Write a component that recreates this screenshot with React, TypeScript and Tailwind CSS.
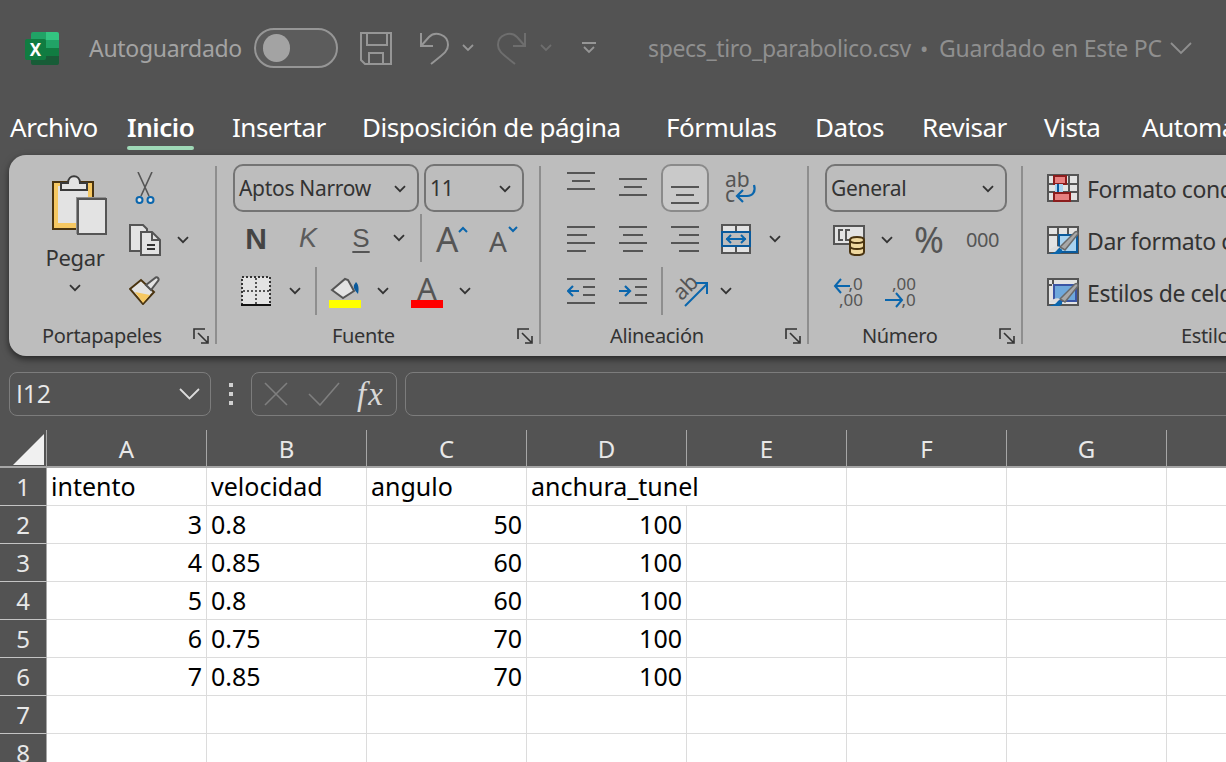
const ui = { fontFamily: '"Noto Sans", sans-serif' };

function Chevron({ className = "" }: { className?: string }) {
  return (
    <svg width="12" height="8" viewBox="0 0 12 8" className={"shrink-0 " + className}>
      <path d="M1 1.2l5 5 5-5" fill="none" stroke="#333" strokeWidth="1.8" />
    </svg>
  );
}

function Launcher() {
  return (
    <svg width="16" height="16" viewBox="0 0 16 16" className="shrink-0">
      <path d="M1 11V1h11M5 5l9 9M15 8v7H8" fill="none" stroke="#333" strokeWidth="1.6" />
    </svg>
  );
}

function Lines({ rows, h = 28 }: { rows: [number, number, number][]; h?: number }) {
  return (
    <svg width="28" height={h} viewBox={`0 0 28 ${h}`} className="shrink-0">
      {rows.map(([x, y, w], i) => (
        <rect key={i} x={x} y={y} width={w} height="2" fill="#555" />
      ))}
    </svg>
  );
}

function ExcelLogo() {
  return (
    <div className="relative w-[34px] h-[33px] shrink-0">
      <svg width="34" height="33" viewBox="0 0 34 33" className="block">
        <path d="M8 0h13v8H6V2a2 2 0 0 1 2-2z" fill="#21a366" />
        <path d="M21 0h11a2 2 0 0 1 2 2v6H21z" fill="#33c481" />
        <rect x="6" y="8" width="15" height="8" fill="#1a8a50" />
        <rect x="21" y="8" width="13" height="8" fill="#21a366" />
        <rect x="6" y="16" width="15" height="8" fill="#107c41" />
        <rect x="21" y="16" width="13" height="8" fill="#107c41" />
        <path d="M6 24h28v7a2 2 0 0 1-2 2H8a2 2 0 0 1-2-2z" fill="#185c37" />
        <rect x="0" y="7" width="21" height="21" rx="2" fill="#107c41" />
      </svg>
      <span className="absolute left-0 top-[7px] w-[21px] h-[21px] flex items-center justify-center text-white font-bold text-[17px] leading-none" style={ui}>
        X
      </span>
    </div>
  );
}

function TitleBar() {
  return (
    <div className="h-[96px] flex items-center pl-[25px] text-[#a3a3a3] whitespace-nowrap" style={ui}>
      <ExcelLogo />
      <span className="ml-[30px] w-[153px] text-[23px] tracking-[-0.3px]">Autoguardado</span>
      <div className="ml-[12px] w-[84px] h-[40px] rounded-[20px] border-2 border-[#969696] bg-[#5c5c5c] flex items-center pl-[7px]">
        <div className="w-[27px] h-[28px] rounded-full bg-[#a3a3a3]" />
      </div>
      <svg width="32" height="33" viewBox="0 0 32 33" className="ml-[22px]">
        <path d="M1 1h30v31H5l-4-4z M7 1v12h20V1 M9 32V21h14v11" fill="none" stroke="#969696" strokeWidth="2" />
      </svg>
      <svg width="30" height="34" viewBox="0 0 30 34" className="ml-[27px]">
        <path d="M2 2v13h12M2 15l8-9c6-6 19-3 19 8 0 6-3 8-17 19" fill="none" stroke="#969696" strokeWidth="2" />
      </svg>
      <svg width="12" height="8" viewBox="0 0 12 8" className="ml-[13px]">
        <path d="M1 1l5 5 5-5" fill="none" stroke="#969696" strokeWidth="1.8" />
      </svg>
      <svg width="30" height="34" viewBox="0 0 30 34" className="ml-[23px]">
        <path d="M28 2v13H16M28 15l-8-9C14 0 1 3 1 14c0 6 3 8 17 19" fill="none" stroke="#6e6e6e" strokeWidth="2" />
      </svg>
      <svg width="12" height="8" viewBox="0 0 12 8" className="ml-[13px]">
        <path d="M1 1l5 5 5-5" fill="none" stroke="#6e6e6e" strokeWidth="1.8" />
      </svg>
      <svg width="14" height="12" viewBox="0 0 14 12" className="ml-[30px]">
        <path d="M0 1h14M2 5l5 5 5-5" fill="none" stroke="#969696" strokeWidth="1.8" />
      </svg>
      <span className="ml-[52px] text-[23px] text-[#8f8f8f] tracking-[-0.35px] w-[272px]">specs_tiro_parabolico.csv</span>
      <span className="text-[22px] text-[#8f8f8f] w-[19px]">•</span>
      <span className="text-[23px] text-[#8f8f8f] tracking-[-0.2px] w-[231px]">Guardado en Este PC</span>
      <svg width="22" height="13" viewBox="0 0 22 13">
        <path d="M1 1l10 10L21 1" fill="none" stroke="#8f8f8f" strokeWidth="1.8" />
      </svg>
    </div>
  );
}

const tabs: [string, number][] = [
  ["Archivo", 117],
  ["Inicio", 105],
  ["Insertar", 130],
  ["Disposición de página", 304],
  ["Fórmulas", 149],
  ["Datos", 107],
  ["Revisar", 122],
  ["Vista", 98],
  ["Automatizar", 160],
];

function Tabs() {
  return (
    <div className="h-[59px] flex pl-[10px] text-white text-[26px] whitespace-nowrap tracking-[-0.45px]" style={ui}>
      {tabs.map(([name, w]) => (
        <div key={name} className="shrink-0 flex flex-col" style={{ width: w }}>
          <div className={"h-[50px] pt-[13px] leading-[36px] " + (name === "Inicio" ? "font-semibold" : "")}>{name}</div>
          {name === "Inicio" && <div className="w-[67px] h-[4px] rounded-[2px] bg-[#9fd9b7]" />}
        </div>
      ))}
    </div>
  );
}

function GroupLabel({ text, pl, launcher }: { text: string; pl: number; launcher?: number }) {
  return (
    <div className="h-[28px] flex items-center text-[20px] text-[#333] whitespace-nowrap tracking-[-0.35px]">
      <span className="shrink-0" style={{ marginLeft: pl, width: launcher }}>{text}</span>
      {launcher !== undefined && <Launcher />}
    </div>
  );
}

function Sep() {
  return <div className="w-[2px] h-[178px] mt-[2px] bg-[#8e8e8e] shrink-0" />;
}

function Select({ text, w }: { text: string; w: number }) {
  return (
    <div className="h-[48px] border-2 border-[#747474] rounded-[10px] flex items-center justify-between pl-[4px] pr-[11px] pt-[2px] text-[21px] text-[#333] shrink-0 tracking-[-0.3px]" style={{ width: w }}>
      {text}
      <Chevron />
    </div>
  );
}

function Clipboard() {
  return (
    <svg width="56" height="62" viewBox="0 0 56 62" className="block">
      <rect x="2" y="9" width="40" height="47" fill="#f6c862" stroke="#4a3410" strokeWidth="2" />
      <rect x="7" y="13" width="30" height="37" fill="#e3e3e3" />
      <path d="M10 10h7c0-9 12-9 12 0h7v7H10z" fill="#e3e3e3" stroke="#3a3a3a" strokeWidth="2" />
      <rect x="25" y="24" width="4" height="37" fill="#8f8f8f" />
      <rect x="25" y="24" width="30" height="3" fill="#8f8f8f" />
      <rect x="27" y="26" width="28" height="35" fill="#e3e3e3" stroke="#555" strokeWidth="2" />
    </svg>
  );
}

function Scissors() {
  return (
    <svg width="20" height="33" viewBox="0 0 20 33" className="block">
      <path d="M3 0l11 24M17 0L6 24" fill="none" stroke="#555" strokeWidth="1.6" />
      <circle cx="4.5" cy="28" r="3" fill="#e3e3e3" stroke="#0a66ad" strokeWidth="2" />
      <circle cx="15.5" cy="28" r="3" fill="#e3e3e3" stroke="#0a66ad" strokeWidth="2" />
    </svg>
  );
}

function CopyIcon() {
  return (
    <svg width="32" height="32" viewBox="0 0 32 32" className="block">
      <path d="M1 1h13l4 4v22H1z" fill="#e3e3e3" stroke="#555" strokeWidth="2" />
      <path d="M12 8h11l8 8v15H12z" fill="#e3e3e3" stroke="#555" strokeWidth="2" />
      <path d="M23 8v8h8" fill="none" stroke="#555" strokeWidth="2" />
      <path d="M18 21h8M18 25h8" stroke="#333" strokeWidth="2" />
    </svg>
  );
}

function BrushIcon() {
  return (
    <svg width="32" height="29" viewBox="0 0 32 29" className="block">
      <path d="M1 13L12 4l13 12-11 12z" fill="#e3e3e3" stroke="#4a3410" strokeWidth="2" />
      <path d="M6 16l15 3-7 8z" fill="#f6c862" />
      <path d="M17 9l9-7c2-2 5 1 3 3l-7 9z" fill="#e3e3e3" stroke="#555" strokeWidth="2" />
    </svg>
  );
}

function Portapapeles() {
  return (
    <div className="w-[206px] shrink-0 flex flex-col">
      <div className="h-[158px] flex">
        <div className="w-[120px] flex flex-col items-center pl-[12px] shrink-0">
          <div className="mt-[9px] ml-[7px]"><Clipboard /></div>
          <span className="mt-[6px] text-[22px] text-[#333] leading-[32px] tracking-[-0.3px]">Pegar</span>
          <Chevron className="mt-[11px]" />
        </div>
        <div className="flex flex-col">
          <div className="mt-[8px] ml-[6px]"><Scissors /></div>
          <div className="mt-[19px] flex items-center">
            <CopyIcon />
            <Chevron className="ml-[16px]" />
          </div>
          <div className="mt-[20px]"><BrushIcon /></div>
        </div>
      </div>
      <GroupLabel text="Portapapeles" pl={33} launcher={151} />
    </div>
  );
}

function Paint() {
  return (
    <svg width="32" height="32" viewBox="0 0 32 32" className="block">
      <path d="M3 14L16 3l3 1 6 11-11 7z" fill="#e3e3e3" stroke="#555" strokeWidth="2" />
      <path d="M27 6c3 3 3 8 2 12-2-3-5-5-4-9z" fill="#0a5a9c" />
      <rect x="0" y="24" width="32" height="8" fill="#ffff00" />
    </svg>
  );
}

function Fuente() {
  return (
    <div className="w-[322px] shrink-0 flex flex-col">
      <div className="h-[158px]">
        <div className="flex pl-[16px] gap-[5px]">
          <Select text="Aptos Narrow" w={186} />
          <Select text="11" w={100} />
        </div>
        <div className="h-[52px] flex items-center text-[#555]" style={{ fontFamily: '"Liberation Sans", sans-serif' }}>
          <span className="ml-[23px] w-[32px] text-center text-[30px] font-bold text-[#444]">N</span>
          <span className="ml-[20px] w-[32px] text-center text-[27px] italic text-[#5c5c5c]">K</span>
          <span className="ml-[21px] w-[32px] text-center text-[26px] underline underline-offset-[4px]">S</span>
          <Chevron className="ml-[16px]" />
          <div className="ml-[15px] w-[2px] h-[48px] bg-[#8e8e8e]" />
          <span className="ml-[14px] w-[22px] text-[35px] leading-none" style={ui}>A</span>
          <svg width="10" height="7" viewBox="0 0 10 7" className="self-start mt-[14px]"><path d="M1 6l4-4 4 4" fill="none" stroke="#0a66ad" strokeWidth="2" /></svg>
          <span className="ml-[21px] w-[18px] text-[28px] leading-none mt-[6px]" style={ui}>A</span>
          <svg width="10" height="7" viewBox="0 0 10 7" className="self-start mt-[14px] ml-[1px]"><path d="M1 1l4 4 4-4" fill="none" stroke="#0a66ad" strokeWidth="2" /></svg>
        </div>
        <div className="h-[52px] mt-[1px] flex items-center">
          <svg width="30" height="31" viewBox="0 0 30 31" className="ml-[24px]">
            <rect x="1" y="1" width="28" height="28" fill="#e3e3e3" stroke="#333" strokeWidth="2" strokeDasharray="2 2" />
            <path d="M15 2v26M2 15h26" stroke="#555" strokeWidth="2" strokeDasharray="2 2" />
            <rect x="0" y="28" width="30" height="2" fill="#111" />
          </svg>
          <Chevron className="ml-[18px]" />
          <div className="ml-[14px] w-[2px] h-[48px] bg-[#8e8e8e]" />
          <div className="ml-[12px] mt-[2px]"><Paint /></div>
          <Chevron className="ml-[16px]" />
          <div className="ml-[22px] w-[32px] mt-[2px] flex flex-col items-center">
            <span className="h-[24px] text-[31px] leading-[24px] text-[#555]" style={ui}>A</span>
            <div className="w-[32px] h-[8px] bg-[#ff0000]" />
          </div>
          <Chevron className="ml-[16px]" />
        </div>
      </div>
      <GroupLabel text="Fuente" pl={115} launcher={185} />
    </div>
  );
}

function WrapIcon() {
  return (
    <svg width="32" height="32" viewBox="0 0 32 32" className="block">
      <text x="0" y="15" fontSize="21" fill="#555" fontFamily="Noto Sans">ab</text>
      <text x="0" y="30" fontSize="21" fill="#555" fontFamily="Noto Sans">c</text>
      <path d="M29 13c2 6-1 11-7 11h-9M18 18l-6 6 6 6" fill="none" stroke="#0a66ad" strokeWidth="2.2" />
    </svg>
  );
}

function MergeIcon() {
  return (
    <svg width="30" height="30" viewBox="0 0 30 30" className="block">
      <rect x="1" y="1" width="28" height="28" fill="#e3e3e3" stroke="#555" strokeWidth="2" />
      <path d="M15 1v28" stroke="#555" strokeWidth="2" />
      <rect x="1" y="8" width="28" height="14" fill="#bdbdbd" stroke="#0a5a9c" strokeWidth="2" />
      <path d="M5 15h20M10 11l-4 4 4 4M20 11l4 4-4 4" fill="none" stroke="#0a66ad" strokeWidth="2" />
    </svg>
  );
}

function OrientIcon() {
  return (
    <svg width="34" height="32" viewBox="0 0 34 32" className="block">
      <text x="0" y="21" fontSize="22" fill="#555" fontFamily="Noto Sans" transform="rotate(-45 10 16)">ab</text>
      <path d="M10 31L32 9M21 8h11v11" fill="none" stroke="#0a66ad" strokeWidth="2" />
    </svg>
  );
}

function Indent({ out }: { out: boolean }) {
  return (
    <svg width="28" height="26" viewBox="0 0 28 26" className="shrink-0">
      <rect x="0" y="0" width="28" height="2" fill="#555" />
      <rect x="16" y="8" width="12" height="2" fill="#555" />
      <rect x="16" y="16" width="12" height="2" fill="#555" />
      <rect x="0" y="24" width="28" height="2" fill="#555" />
      {out ? (
        <path d="M12 13H2M6 8l-5 5 5 5" fill="none" stroke="#0a66ad" strokeWidth="2.2" />
      ) : (
        <path d="M0 13h10M6 8l5 5-5 5" fill="none" stroke="#0a66ad" strokeWidth="2.2" />
      )}
    </svg>
  );
}

function Alineacion() {
  return (
    <div className="w-[266px] shrink-0 flex flex-col">
      <div className="h-[158px]">
        <div className="h-[48px] flex items-start">
          <div className="ml-[26px] mt-[8px]"><Lines rows={[[0, 0, 28], [5, 8, 18], [0, 16, 28]]} /></div>
          <div className="ml-[24px] mt-[14px]"><Lines rows={[[0, 0, 28], [5, 8, 18], [0, 16, 28]]} /></div>
          <div className="ml-[14px] w-[48px] h-[48px] rounded-[10px] border-2 border-[#8a8a8a] bg-[#c9c9c9] flex justify-center pt-[20px]">
            <Lines h={18} rows={[[0, 0, 28], [5, 8, 18], [0, 16, 28]]} />
          </div>
          <div className="ml-[16px] mt-[8px]"><WrapIcon /></div>
        </div>
        <div className="h-[52px] mt-[1px] flex items-center">
          <div className="ml-[26px]"><Lines rows={[[0, 1, 28], [0, 9, 20], [0, 17, 28], [0, 25, 19]]} /></div>
          <div className="ml-[24px]"><Lines rows={[[0, 1, 28], [4, 9, 20], [0, 17, 28], [4, 25, 20]]} /></div>
          <div className="ml-[24px]"><Lines rows={[[0, 1, 28], [8, 9, 20], [0, 17, 28], [8, 25, 20]]} /></div>
          <div className="ml-[22px]"><MergeIcon /></div>
          <Chevron className="ml-[18px]" />
        </div>
        <div className="h-[52px] flex items-center">
          <div className="ml-[26px]"><Indent out /></div>
          <div className="ml-[24px]"><Indent out={false} /></div>
          <div className="ml-[14px] w-[2px] h-[48px] bg-[#8e8e8e]" />
          <div className="ml-[12px]"><OrientIcon /></div>
          <Chevron className="ml-[11px]" />
        </div>
      </div>
      <GroupLabel text="Alineación" pl={69} launcher={175} />
    </div>
  );
}

function Currency() {
  return (
    <svg width="32" height="31" viewBox="0 0 32 31" className="block">
      <rect x="1" y="1" width="30" height="18" fill="#e3e3e3" stroke="#555" strokeWidth="2" />
      <path d="M10 5H6v10h4M17 5h-4v10h4" fill="none" stroke="#555" strokeWidth="2" />
      <path d="M17 15c0-4 14-4 14 0v12c0 4-14 4-14 0z" fill="#f0d9a0" stroke="#4a3410" strokeWidth="2" />
      <path d="M17 15c0 4 14 4 14 0M17 21c0 4 14 4 14 0" fill="none" stroke="#4a3410" strokeWidth="2" />
    </svg>
  );
}

function Decimals({ more }: { more: boolean }) {
  return (
    <svg width="31" height="33" viewBox="0 0 31 33" className="block" fontFamily="Noto Sans" fontSize="17" fill="#555">
      {more ? (
        <>
          <text x="15.500" y="15">,0</text>
          <text x="6" y="31">,00</text>
          <path d="M17 11H2M8 4l-6 7 6 7" fill="none" stroke="#0a66ad" strokeWidth="2" />
        </>
      ) : (
        <>
          <text x="7" y="15">,00</text>
          <text x="16.500" y="31">,0</text>
          <path d="M0 25h17M11 18l6 7-6 7" fill="none" stroke="#0a66ad" strokeWidth="2" />
        </>
      )}
    </svg>
  );
}

function Numero() {
  return (
    <div className="w-[212px] shrink-0 flex flex-col">
      <div className="h-[158px]">
        <div className="pl-[16px]"><Select text="General" w={182} /></div>
        <div className="h-[52px] mt-[2px] flex items-center text-[#555] whitespace-nowrap" style={ui}>
          <div className="ml-[24px]"><Currency /></div>
          <Chevron className="ml-[16px]" />
          <span className="ml-[21px] w-[40px] text-[36px] leading-none">%</span>
          <span className="ml-[12px] text-[20px] tracking-[-0.5px]">000</span>
        </div>
        <div className="h-[46px] mt-[2px] flex items-center">
          <div className="ml-[24px]"><Decimals more /></div>
          <div className="ml-[21px]"><Decimals more={false} /></div>
        </div>
      </div>
      <GroupLabel text="Número" pl={53} launcher={137} />
    </div>
  );
}

function CondIcon() {
  return (
    <svg width="32" height="28" viewBox="0 0 32 28" className="block shrink-0">
      <rect x="1" y="1" width="30" height="26" fill="#e3e3e3" stroke="#555" strokeWidth="2" />
      <path d="M1 10h30M1 18h30M10 1v26M22 1v26" stroke="#555" strokeWidth="2" />
      <rect x="7" y="2" width="12" height="8" fill="#e88080" stroke="#8b1c1c" strokeWidth="2" />
      <rect x="7" y="19" width="16" height="8" fill="#e88080" stroke="#8b1c1c" strokeWidth="2" />
      <rect x="8" y="10" width="8" height="8" fill="#a9d3f0" />
      <path d="M11 10v8" stroke="#0a5a9c" strokeWidth="2" />
    </svg>
  );
}

function Brush() {
  return (
    <>
      <path d="M13 21L28 6c2-1 3 0 3 2L18 24z" fill="#a8a8a8" stroke="#6a6a6a" strokeWidth="1.500" />
      <path d="M1 27c4 1 8-1 9-3 3-3 6-1 5 2-2 3-9 3-14 1z" fill="#0a66ad" />
      <path d="M2 24c4-3 8-5 11-3l-3 3c-3 0-5 1-8 0z" fill="#dcdcdc" />
    </>
  );
}

function TableIcon() {
  return (
    <svg width="32" height="28" viewBox="0 0 32 28" className="block shrink-0">
      <rect x="1" y="1" width="30" height="26" fill="#e3e3e3" stroke="#555" strokeWidth="2" />
      <path d="M1 9h30M11 1v26M21 1v26" stroke="#555" strokeWidth="2" />
      <rect x="12" y="9" width="18" height="17" fill="#a9d3f0" stroke="#0a5a9c" strokeWidth="2" />
      <Brush />
    </svg>
  );
}

function CellStyleIcon() {
  return (
    <svg width="32" height="28" viewBox="0 0 32 28" className="block shrink-0">
      <rect x="1" y="1" width="30" height="26" fill="#e3e3e3" stroke="#555" strokeWidth="2" />
      <path d="M1 7h4M6 2v4" stroke="#555" strokeWidth="2" />
      <rect x="7" y="7" width="22" height="16" fill="#6ea8dc" stroke="#3a55a5" strokeWidth="2" />
      <Brush />
    </svg>
  );
}

function Estilos() {
  const rows: [React.ReactNode, string][] = [
    [<CondIcon key="c" />, "Formato condicional"],
    [<TableIcon key="t" />, "Dar formato como tabla"],
    [<CellStyleIcon key="s" />, "Estilos de celda"],
  ];
  return (
    <div className="w-[300px] shrink-0 flex flex-col">
      <div className="h-[158px] pt-[10px] pl-[24px] flex flex-col gap-[24px]">
        {rows.map(([icon, text]) => (
          <div key={text} className="h-[28px] flex items-center gap-[8px] text-[23px] text-[#333] whitespace-nowrap tracking-[-0.4px]">
            {icon}
            <span className="mt-[2px]">{text}</span>
          </div>
        ))}
      </div>
      <GroupLabel text="Estilos" pl={158} />
    </div>
  );
}

function Ribbon() {
  return (
    <div className="ml-[9px] w-[1300px] h-[201px] shrink-0 rounded-l-[17px] bg-[#bdbdbd] pt-[9px] flex shadow-[0_3px_7px_rgba(0,0,0,0.55)]" style={ui}>
      <Portapapeles />
      <Sep />
      <Fuente />
      <Sep />
      <Alineacion />
      <Sep />
      <Numero />
      <Sep />
      <Estilos />
    </div>
  );
}

function FormulaBar() {
  return (
    <div className="mt-[16px] h-[44px] flex text-[#e8e8e8]" style={{ fontFamily: '"Open Sans", sans-serif' }}>
      <div className="ml-[9px] w-[202px] shrink-0 border border-[#7c7c7c] rounded-[8px] flex items-center justify-between pl-[6px] pr-[10px] text-[25px] tracking-[-0.3px]">
        I12
        <svg width="21" height="12" viewBox="0 0 21 12">
          <path d="M1 1l9.500 9.500L20 1" fill="none" stroke="#dcdcdc" strokeWidth="1.8" />
        </svg>
      </div>
      <div className="w-[40px] shrink-0 flex flex-col items-center justify-center gap-[5px]">
        <div className="w-[4px] h-[4px] bg-[#d0d0d0]" />
        <div className="w-[4px] h-[4px] bg-[#d0d0d0]" />
        <div className="w-[4px] h-[4px] bg-[#d0d0d0]" />
      </div>
      <div className="w-[146px] shrink-0 border border-[#7c7c7c] rounded-[8px] flex items-center pl-[12px]">
        <svg width="24" height="24" viewBox="0 0 24 24" className="shrink-0">
          <path d="M1 1l22 22M23 1L1 23" stroke="#7f7f7f" strokeWidth="1.6" />
        </svg>
        <svg width="32" height="24" viewBox="0 0 32 24" className="ml-[20px] shrink-0">
          <path d="M1 12l11 11L31 1" fill="none" stroke="#7f7f7f" strokeWidth="1.6" />
        </svg>
        <span className="ml-[17px] text-[33px] italic tracking-[2px] text-[#d8d8d8] leading-none" style={{ fontFamily: '"Liberation Serif", serif' }}>fx</span>
      </div>
      <div className="ml-[8px] w-[900px] shrink-0 border border-[#7c7c7c] rounded-l-[8px]" />
    </div>
  );
}

const cols = ["A", "B", "C", "D", "E", "F", "G", ""];

const data: string[][] = [
  ["intento", "velocidad", "angulo", "anchura_tunel"],
  ["3", "0.8", "50", "100"],
  ["4", "0.85", "60", "100"],
  ["5", "0.8", "60", "100"],
  ["6", "0.75", "70", "100"],
  ["7", "0.85", "70", "100"],
  [],
  [],
];

function Sheet() {
  return (
    <div className="mt-[14px] flex-1 min-h-0 whitespace-nowrap" style={ui}>
      <div className="h-[38px] flex border-b-2 border-[#a6a6a6] text-[#e8e8e8] text-[24px]">
        <div className="w-[47px] shrink-0 border-r border-[#a6a6a6] flex pl-[13px] pt-[4px]">
          <svg width="31" height="31" viewBox="0 0 31 31">
            <path d="M31 0v31H0z" fill="#f0f0f0" />
          </svg>
        </div>
        {cols.map((c, i) => (
          <div key={i} className="w-[160px] shrink-0 border-r border-[#a6a6a6] flex items-center justify-center pt-[1px]">{c}</div>
        ))}
      </div>
      {data.map((row, r) => (
        <div key={r} className="h-[38px] flex">
          <div className="w-[47px] shrink-0 bg-[#535353] border-r border-b border-r-[#a6a6a6] border-b-[#c4c4c4] flex items-center justify-center text-[#e8e8e8] text-[24px]">{r + 1}</div>
          {cols.map((_, c) => {
            const value = row[c] ?? "";
            const isNumber = c !== 1 && r > 0;
            const overflow = value === "anchura_tunel";
            return (
              <div
                key={c}
                className={"w-[160px] shrink-0 bg-white border-b border-[#dcdcdc] flex items-center text-black text-[25px] " +
                  (overflow ? "relative z-10 bg-transparent " : "border-r ") +
                  (isNumber ? "justify-end pr-[4px]" : "pl-[4px]")}
              >
                {value}
              </div>
            );
          })}
        </div>
      ))}
    </div>
  );
}

export default function App() {
  return (
    <div className="w-[1226px] h-[762px] overflow-hidden bg-[#535353] flex flex-col">
      <TitleBar />
      <Tabs />
      <Ribbon />
      <FormulaBar />
      <Sheet />
    </div>
  );
}
